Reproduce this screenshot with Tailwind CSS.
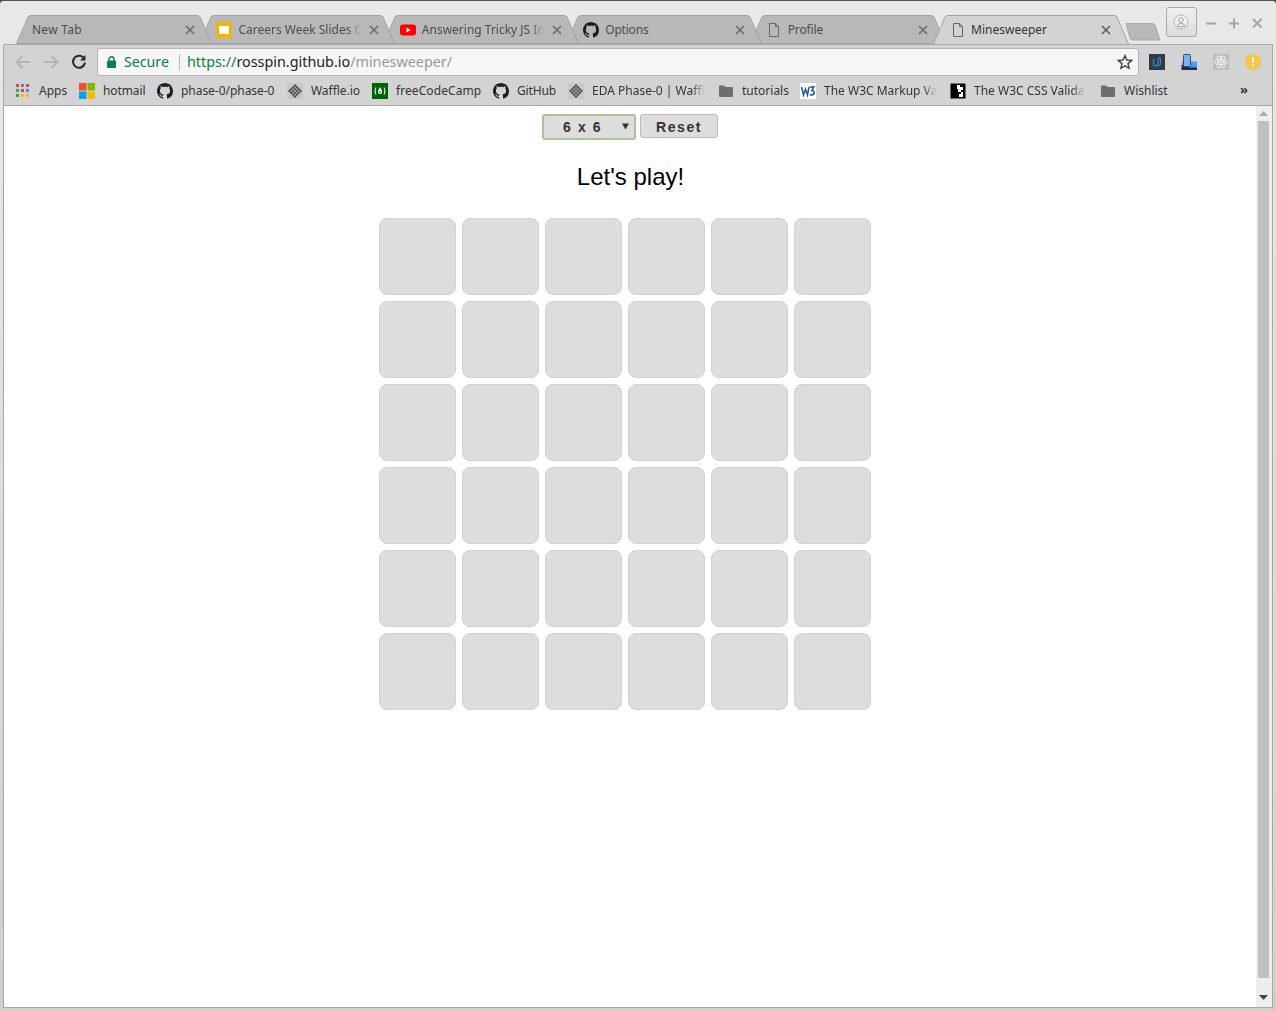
<!DOCTYPE html>
<html lang="en">
<head>
    <meta charset="UTF-8">
    <title>Minesweeper</title>
    <script src="https://cdn.jsdelivr.net/npm/@tailwindcss/browser@4"></script>
</head>
<body class="bg-[#4a4a4a] overflow-hidden">
<div class="w-[1276px] h-[1011px] flex flex-col rounded-t-[4px] border-t border-[#555] bg-gradient-to-b from-[#e9e9e9] to-[#cfcfcf] px-[3px] pb-[3px] font-['Noto_Sans',sans-serif] text-[12px] text-[#333]">

    <!-- tab strip -->
    <div class="h-[43px] shrink-0 flex items-end pl-[13px] relative">
        <div class="relative z-[6] w-[196px] h-[29px] shrink-0 flex items-center pl-[16px] pr-[16px]">
            <svg class="absolute inset-0" width="196" height="29"><path d="M0.5 28.5 L12 2 Q13 .5 15 .5 L181 .5 Q183 .5 184 2 L195.5 28.5 Z" fill="#b8b8b8" stroke="#a3a3a3"/></svg>
            <span class="relative flex-1 text-[#4c4c4c] tracking-[0.25px]">New Tab</span>
            <svg class="relative mr-[1px]" width="10" height="10" viewBox="0 0 10 10"><path d="M1 1 L9 9 M9 1 L1 9" stroke="#6b6b6b" stroke-width="1.6"/></svg>
        </div>
        <div class="relative z-[5] w-[196px] h-[29px] shrink-0 -ml-[12.6px] flex items-center pl-[17px] pr-[16px]">
            <svg class="absolute inset-0" width="196" height="29"><path d="M0.5 28.5 L12 2 Q13 .5 15 .5 L181 .5 Q183 .5 184 2 L195.5 28.5 Z" fill="#b8b8b8" stroke="#a3a3a3"/></svg>
            <svg class="relative shrink-0" width="16" height="16" viewBox="0 0 16 16"><rect width="16" height="16" rx="2" fill="#f4b400"/><rect x="3" y="4" width="10" height="8" fill="#fff"/></svg>
            <span class="relative ml-[6px] whitespace-nowrap text-[#4c4c4c] [mask-image:linear-gradient(to_right,#000_88%,transparent)]">Careers Week Slides C</span>
            <svg class="relative ml-auto" width="10" height="10" viewBox="0 0 10 10"><path d="M1 1 L9 9 M9 1 L1 9" stroke="#6b6b6b" stroke-width="1.6"/></svg>
        </div>
        <div class="relative z-[4] w-[196px] h-[29px] shrink-0 -ml-[12.6px] flex items-center pl-[17px] pr-[16px]">
            <svg class="absolute inset-0" width="196" height="29"><path d="M0.5 28.5 L12 2 Q13 .5 15 .5 L181 .5 Q183 .5 184 2 L195.5 28.5 Z" fill="#b8b8b8" stroke="#a3a3a3"/></svg>
            <svg class="relative shrink-0" width="16" height="16" viewBox="0 0 16 16"><rect y="2.5" width="16" height="11" rx="3" fill="#f00"/><path d="M6.5 5.5 L10.5 8 L6.5 10.5 Z" fill="#fff"/></svg>
            <span class="relative ml-[6px] whitespace-nowrap text-[#4c4c4c] [mask-image:linear-gradient(to_right,#000_88%,transparent)]">Answering Tricky JS In</span>
            <svg class="relative ml-auto mr-[1px]" width="10" height="10" viewBox="0 0 10 10"><path d="M1 1 L9 9 M9 1 L1 9" stroke="#6b6b6b" stroke-width="1.6"/></svg>
        </div>
        <div class="relative z-[3] w-[196px] h-[29px] shrink-0 -ml-[12.6px] flex items-center pl-[17px] pr-[16px]">
            <svg class="absolute inset-0" width="196" height="29"><path d="M0.5 28.5 L12 2 Q13 .5 15 .5 L181 .5 Q183 .5 184 2 L195.5 28.5 Z" fill="#b8b8b8" stroke="#a3a3a3"/></svg>
            <svg class="relative shrink-0" width="16" height="16" viewBox="0 0 16 16"><path fill="#1b1f23" d="M8 0C3.58 0 0 3.58 0 8c0 3.54 2.29 6.53 5.47 7.59.4.07.55-.17.55-.38 0-.19-.01-.82-.01-1.49-2.01.37-2.53-.49-2.69-.94-.09-.23-.48-.94-.82-1.13-.28-.15-.68-.52-.01-.53.63-.01 1.08.58 1.23.82.72 1.21 1.87.87 2.33.66.07-.52.28-.87.51-1.07-1.78-.2-3.64-.89-3.64-3.95 0-.87.31-1.59.82-2.15-.08-.2-.36-1.02.08-2.12 0 0 .67-.21 2.2.82.64-.18 1.32-.27 2-.27.68 0 1.36.09 2 .27 1.53-1.04 2.2-.82 2.2-.82.44 1.1.16 1.92.08 2.12.51.56.82 1.27.82 2.15 0 3.07-1.87 3.75-3.65 3.95.29.25.54.73.54 1.48 0 1.07-.01 1.93-.01 2.2 0 .21.15.46.55.38A8.013 8.013 0 0016 8c0-4.42-3.58-8-8-8z"/></svg>
            <span class="relative ml-[6px] text-[#4c4c4c] tracking-[-0.2px]">Options</span>
            <svg class="relative ml-auto mr-[1px]" width="10" height="10" viewBox="0 0 10 10"><path d="M1 1 L9 9 M9 1 L1 9" stroke="#6b6b6b" stroke-width="1.6"/></svg>
        </div>
        <div class="relative z-[2] w-[196px] h-[29px] shrink-0 -ml-[12.6px] flex items-center pl-[16px] pr-[16px]">
            <svg class="absolute inset-0" width="196" height="29"><path d="M0.5 28.5 L12 2 Q13 .5 15 .5 L181 .5 Q183 .5 184 2 L195.5 28.5 Z" fill="#b8b8b8" stroke="#a3a3a3"/></svg>
            <svg class="relative shrink-0" width="16" height="16" viewBox="0 0 16 16"><path d="M3.5 1.5 H9.5 L12.5 4.5 V14.5 H3.5 Z M9.5 1.5 V4.5 H12.5" fill="none" stroke="#666"/></svg>
            <span class="relative ml-[6px] text-[#4c4c4c] tracking-[-0.1px]">Profile</span>
            <svg class="relative ml-auto mr-[2px]" width="10" height="10" viewBox="0 0 10 10"><path d="M1 1 L9 9 M9 1 L1 9" stroke="#6b6b6b" stroke-width="1.6"/></svg>
        </div>
        <div class="relative z-[7] w-[196px] h-[30px] shrink-0 -ml-[12.6px] -mb-[1px] flex items-center pl-[17px] pr-[16px] pb-[1px]">
            <svg class="absolute inset-0" width="196" height="30"><path d="M0.5 29 L12 2 Q13 .5 15 .5 L181 .5 Q183 .5 184 2 L195.5 29" fill="#d3d3d3" stroke="#a3a3a3"/></svg>
            <svg class="relative shrink-0" width="16" height="16" viewBox="0 0 16 16"><path d="M3.5 1.5 H9.5 L12.5 4.5 V14.5 H3.5 Z M9.5 1.5 V4.5 H12.5" fill="none" stroke="#666"/></svg>
            <span class="relative ml-[5px] text-[#333]">Minesweeper</span>
            <svg class="relative ml-auto mr-[2px]" width="10" height="10" viewBox="0 0 10 10"><path d="M1 1 L9 9 M9 1 L1 9" stroke="#5c5c5c" stroke-width="1.6"/></svg>
        </div>
        <!-- new tab button -->
        <svg class="relative -ml-[4px] mb-[3px] shrink-0" width="36" height="18"><path d="M1 .5 H27 Q29 .5 30 2 L35 17 H7 Q6 17 5 15 Z" fill="#b8b8b8" stroke="#a8a8a8"/></svg>

        <!-- profile and window buttons sit over the strip -->
        <div class="absolute left-[1163px] top-[6px] w-[31px] h-[30px] pr-[1px] rounded-[3px] border border-[#a8a8a8] bg-gradient-to-b from-[#f0f0f0] to-[#dcdcdc] flex items-center justify-center">
            <svg width="16" height="16" viewBox="0 0 16 16"><circle cx="8" cy="8" r="7" fill="#f2f2f2" stroke="#b4b4b4"/><circle cx="8" cy="6" r="2.3" fill="none" stroke="#a0a0a0"/><path d="M4 12 Q4.5 9.5 8 9.5 Q11.5 9.5 12 12 Q8 13.5 4 12 Z" fill="none" stroke="#a0a0a0"/></svg>
        </div>
        <div class="absolute left-[1203px] top-[17px] flex items-center gap-[12px]">
            <svg width="11" height="11" viewBox="0 0 11 11"><path d="M0 5.5 H10" stroke="#a5a5a5" stroke-width="2"/></svg>
            <svg width="11" height="11" viewBox="0 0 11 11"><path d="M0 5.5 H10 M5 .5 V10.5" stroke="#a5a5a5" stroke-width="2"/></svg>
            <svg width="11" height="11" viewBox="0 0 11 11"><path d="M1 1 L9.5 9.5 M9.5 1 L1 9.5" stroke="#a5a5a5" stroke-width="2"/></svg>
        </div>
    </div>

    <!-- toolbar -->
    <div class="h-[35px] shrink-0 relative z-[1] flex items-center bg-[#d3d3d3] border-t border-l border-r border-[#a8a8a8] rounded-tl-[2px]">
        <svg class="ml-[10px]" width="18" height="16" viewBox="0 0 18 16"><path d="M16 8 H3 M8.5 2 L2.5 8 L8.5 14" fill="none" stroke="#b4b4b4" stroke-width="2"/></svg>
        <svg class="ml-[10px]" width="18" height="16" viewBox="0 0 18 16"><path d="M2 8 H15 M9.5 2 L15.5 8 L9.5 14" fill="none" stroke="#b4b4b4" stroke-width="2"/></svg>
        <svg class="ml-[11px]" width="16" height="16" viewBox="0 0 16 16"><path d="M13.4 5 A6 6 0 1 0 14 8.5" fill="none" stroke="#2a2a2a" stroke-width="2"/><path d="M14.5 1 V6.5 H9 Z" fill="#2a2a2a"/></svg>
        <div class="ml-[10px] w-[1042px] h-[28px] flex items-center rounded-[3px] border border-[#b4b4b4] bg-[#f6f6f6] relative">
            <svg class="ml-[9px]" width="9" height="12" viewBox="0 0 9 12"><rect y="4.5" width="9" height="7.5" rx="1" fill="#0b8043"/><path d="M2 5 V3.2 A2.5 2.5 0 0 1 7 3.2 V5" fill="none" stroke="#0b8043" stroke-width="1.4"/></svg>
            <span class="ml-[8px] text-[14.2px] text-[#0b8043]">Secure</span>
            <span class="ml-[10px] w-px h-[16px] bg-[#b8b8b8]"></span>
            <span class="ml-[7px] text-[14.35px] whitespace-nowrap text-[#999]"><span class="text-[#0b8043]">https://</span><span class="text-[#222]">rosspin.github.io</span>/minesweeper/</span>
            <svg class="ml-auto mr-[5px]" width="16" height="16" viewBox="0 0 16 16"><path d="M8 1.6 L9.9 6 L14.7 6.4 L11 9.6 L12.2 14.3 L8 11.8 L3.8 14.3 L5 9.6 L1.3 6.4 L6.1 6 Z" fill="none" stroke="#444" stroke-width="1.4"/></svg>
        </div>
        <div class="ml-[10px] flex items-center gap-[16px]">
            <svg width="16" height="16" viewBox="0 0 16 16"><rect width="16" height="16" fill="#2f3b4b"/><path d="M4.5 4.5 V9.5 Q4.5 12 6.8 12 Q9 12 9 9.5 V5 Q9 3.8 10 3.8 Q11.5 3.8 11.5 6 V9 Q11.5 11 10 12" fill="none" stroke="#3a86b4" stroke-width="1.3"/></svg>
            <svg width="16" height="16" viewBox="0 0 16 16"><rect x="1" y="7.5" width="15" height="8.5" rx="1" fill="#4a9cf0"/><path d="M0.5 11 H8 V13.5 H16 V16 H0.5 Z" fill="#1c2c44"/><rect x="2.5" y="0.5" width="7" height="12" rx="1" fill="#7ab4ee" stroke="#33506f"/></svg>
            <svg width="16" height="16" viewBox="0 0 16 16"><rect width="16" height="16" fill="#bdbdbd"/><g fill="none" stroke="#eee"><ellipse cx="8" cy="8" rx="6.5" ry="2.6"/><ellipse cx="8" cy="8" rx="6.5" ry="2.6" transform="rotate(60 8 8)"/><ellipse cx="8" cy="8" rx="6.5" ry="2.6" transform="rotate(120 8 8)"/></g><circle cx="8" cy="8" r="1.4" fill="#eee"/></svg>
            <svg width="16" height="16" viewBox="0 0 16 16"><circle cx="8" cy="8" r="8" fill="#f6c644"/><rect x="7" y="3.5" width="2" height="5.5" fill="#fff"/><rect x="7" y="10.5" width="2" height="2" fill="#fff"/></svg>
        </div>
    </div>

    <!-- bookmarks bar -->
    <div class="h-[27px] shrink-0 flex items-center gap-[12px] pl-[12px] pb-[2px] bg-[#d3d3d3] border-l border-r border-b border-[#a8a8a8] relative whitespace-nowrap">
        <div class="flex items-center gap-[7px] w-[51px]">
            <svg class="shrink-0" width="16" height="16" viewBox="1 0 16 16"><rect x="1" y="1" width="3" height="3" fill="#ea4335"/><rect x="6" y="1" width="3" height="3" fill="#4285f4"/><rect x="11" y="1" width="3" height="3" fill="#ea4335"/><rect x="1" y="6" width="3" height="3" fill="#34a853"/><rect x="6" y="6" width="3" height="3" fill="#ea4335"/><rect x="11" y="6" width="3" height="3" fill="#4285f4"/><rect x="1" y="11" width="3" height="3" fill="#34a853"/><rect x="6" y="11" width="3" height="3" fill="#fbbc05"/><rect x="11" y="11" width="3" height="3" fill="#fbbc05"/></svg>
            <span>Apps</span>
        </div>
        <div class="flex items-center gap-[8px] w-[66px]">
            <svg class="shrink-0" width="16" height="16" viewBox="0 0 16 16"><rect width="7.5" height="7.5" fill="#f25022"/><rect x="8.5" width="7.5" height="7.5" fill="#7fba00"/><rect y="8.5" width="7.5" height="7.5" fill="#00a4ef"/><rect x="8.5" y="8.5" width="7.5" height="7.5" fill="#ffb900"/></svg>
            <span class="tracking-[-0.1px]">hotmail</span>
        </div>
        <div class="flex items-center gap-[8px] w-[118px]">
            <svg class="shrink-0" width="16" height="16" viewBox="0 0 16 16"><path fill="#1b1f23" d="M8 0C3.58 0 0 3.58 0 8c0 3.54 2.29 6.53 5.47 7.59.4.07.55-.17.55-.38 0-.19-.01-.82-.01-1.49-2.01.37-2.53-.49-2.69-.94-.09-.23-.48-.94-.82-1.13-.28-.15-.68-.52-.01-.53.63-.01 1.08.58 1.23.82.72 1.21 1.87.87 2.33.66.07-.52.28-.87.51-1.07-1.78-.2-3.64-.89-3.64-3.95 0-.87.31-1.59.82-2.15-.08-.2-.36-1.02.08-2.12 0 0 .67-.21 2.2.82.64-.18 1.32-.27 2-.27.68 0 1.36.09 2 .27 1.53-1.04 2.2-.82 2.2-.82.44 1.1.16 1.92.08 2.12.51.56.82 1.27.82 2.15 0 3.07-1.87 3.75-3.65 3.95.29.25.54.73.54 1.48 0 1.07-.01 1.93-.01 2.2 0 .21.15.46.55.38A8.013 8.013 0 0016 8c0-4.42-3.58-8-8-8z"/></svg>
            <span class="tracking-[-0.04px]">phase-0/phase-0</span>
        </div>
        <div class="flex items-center gap-[8px] w-[73px]">
            <svg class="shrink-0" width="16" height="16" viewBox="0 0 16 16"><rect width="16" height="16" fill="#c8c8c8"/><path d="M8 1 L15 8 L8 15 L1 8 Z" fill="#4a4a4a"/><path d="M4.5 4.5 L11.5 11.5 M6.25 2.75 L13.25 9.75 M2.75 6.25 L9.75 13.25 M11.5 4.5 L4.5 11.5 M9.75 2.75 L2.75 9.75 M13.25 6.25 L6.25 13.25" stroke="#c8c8c8" stroke-width=".7"/></svg>
            <span class="tracking-[-0.05px]">Waffle.io</span>
        </div>
        <div class="flex items-center gap-[8px] w-[109px]">
            <svg class="shrink-0" width="16" height="16" viewBox="0 0 16 16"><rect width="16" height="16" fill="#006400"/><path d="M3.8 4.5 Q2.2 8 3.8 11.5 M12.2 4.5 Q13.8 8 12.2 11.5" fill="none" stroke="#fff"/><path d="M8 4 Q10.5 7.5 10 9.5 Q9.5 11 8 11 Q6.5 11 6 9.5 Q5.7 7.5 8 4 Z" fill="#fff"/><path d="M8 7.5 Q9 9 8.6 10 H7.4 Q7 9 8 7.5 Z" fill="#006400"/></svg>
            <span class="tracking-[0.08px]">freeCodeCamp</span>
        </div>
        <div class="flex items-center gap-[8px] w-[63px]">
            <svg class="shrink-0" width="16" height="16" viewBox="0 0 16 16"><path fill="#1b1f23" d="M8 0C3.58 0 0 3.58 0 8c0 3.54 2.29 6.53 5.47 7.59.4.07.55-.17.55-.38 0-.19-.01-.82-.01-1.49-2.01.37-2.53-.49-2.69-.94-.09-.23-.48-.94-.82-1.13-.28-.15-.68-.52-.01-.53.63-.01 1.08.58 1.23.82.72 1.21 1.87.87 2.33.66.07-.52.28-.87.51-1.07-1.78-.2-3.64-.89-3.64-3.95 0-.87.31-1.59.82-2.15-.08-.2-.36-1.02.08-2.12 0 0 .67-.21 2.2.82.64-.18 1.32-.27 2-.27.68 0 1.36.09 2 .27 1.53-1.04 2.2-.82 2.2-.82.44 1.1.16 1.92.08 2.12.51.56.82 1.27.82 2.15 0 3.07-1.87 3.75-3.65 3.95.29.25.54.73.54 1.48 0 1.07-.01 1.93-.01 2.2 0 .21.15.46.55.38A8.013 8.013 0 0016 8c0-4.42-3.58-8-8-8z"/></svg>
            <span class="tracking-[-0.15px]">GitHub</span>
        </div>
        <div class="flex items-center gap-[8px] w-[138px]">
            <svg class="shrink-0" width="16" height="16" viewBox="0 0 16 16"><rect width="16" height="16" fill="#c8c8c8"/><path d="M8 1 L15 8 L8 15 L1 8 Z" fill="#4a4a4a"/><path d="M4.5 4.5 L11.5 11.5 M6.25 2.75 L13.25 9.75 M2.75 6.25 L9.75 13.25 M11.5 4.5 L4.5 11.5 M9.75 2.75 L2.75 9.75 M13.25 6.25 L6.25 13.25" stroke="#c8c8c8" stroke-width=".7"/></svg>
            <span class="[mask-image:linear-gradient(to_right,#000_88%,transparent)]">EDA Phase-0 | Waffl</span>
        </div>
        <div class="flex items-center gap-[8px] w-[70px]">
            <svg class="shrink-0" width="16" height="16" viewBox="0 0 16 16"><path d="M1 3.5 Q1 2.5 2 2.5 H6 L7.5 4 H14 Q15 4 15 5 V13 Q15 14 14 14 H2 Q1 14 1 13 Z" fill="#6e6e6e"/></svg>
            <span>tutorials</span>
        </div>
        <div class="flex items-center gap-[8px] w-[138px]">
            <svg class="shrink-0" width="16" height="16" viewBox="0 0 16 16"><rect width="16" height="16" fill="#fff"/><path d="M1.5 4 L3.5 12 L5.5 6 L7.5 12 L9 4" fill="none" stroke="#1a5a9a" stroke-width="1.5"/><path d="M10 4 H14 L11.8 7.5 Q15 8 14 10.5 Q12.5 13 10 11.5" fill="none" stroke="#1a5a9a" stroke-width="1.5"/></svg>
            <span class="[mask-image:linear-gradient(to_right,#000_88%,transparent)]">The W3C Markup Va</span>
        </div>
        <div class="flex items-center gap-[8px] w-[138px]">
            <svg class="shrink-0" width="16" height="16" viewBox="0 0 16 16"><rect width="16" height="16" fill="#000" stroke="#ddd"/><path d="M7 2 H10 V4 H13 V7 H11 V9 H13 V14 H9 V11 H11 V9 H8 V6 H7 Z" fill="#fff"/></svg>
            <span class="[mask-image:linear-gradient(to_right,#000_88%,transparent)]">The W3C CSS Valida</span>
        </div>
        <div class="flex items-center gap-[8px]">
            <svg class="shrink-0" width="16" height="16" viewBox="0 0 16 16"><path d="M1 3.5 Q1 2.5 2 2.5 H6 L7.5 4 H14 Q15 4 15 5 V13 Q15 14 14 14 H2 Q1 14 1 13 Z" fill="#6e6e6e"/></svg>
            <span>Wishlist</span>
        </div>
        <span class="absolute left-[1236px] top-[1px] text-[13px] font-bold text-[#333]">»</span>
    </div>

    <!-- page -->
    <div class="flex-1 min-h-0 flex bg-white border-l border-r border-b border-[#a8a8a8] font-['Liberation_Sans',sans-serif]">
        <main class="flex-1 flex flex-col items-center pt-[8px]">
            <div class="flex items-start gap-[4px]">
                <div class="relative">
                    <select class="appearance-none block w-[94px] h-[26px] pl-[19px] rounded-[3px] border-2 border-[#a9c49a] bg-[#ddd] text-[14px] font-bold tracking-[1.6px] text-[#333]">
                        <option>6 x 6</option>
                    </select>
                    <svg class="absolute right-[7px] top-[9px]" width="7" height="7" viewBox="0 0 7 7"><path d="M0 .5 H7 L3.5 6.5 Z" fill="#333"/></svg>
                </div>
                <button class="w-[78px] h-[24px] pt-[2px] rounded-[3px] border border-[#bbb] bg-[#ddd] text-[14px] leading-[20px] font-bold tracking-[1.6px] text-[#333]">Reset</button>
            </div>
            <h1 class="mt-[23px] ml-[1px] text-[24px] leading-[28px] text-black">Let's play!</h1>
            <div class="mt-[27px] mr-[10px] grid grid-cols-[repeat(6,77px)] auto-rows-[77px] gap-[6px]">
                <div class="rounded-[8px] border border-[#d2d2d2] bg-[#ddd]"></div>
                <div class="rounded-[8px] border border-[#d2d2d2] bg-[#ddd]"></div>
                <div class="rounded-[8px] border border-[#d2d2d2] bg-[#ddd]"></div>
                <div class="rounded-[8px] border border-[#d2d2d2] bg-[#ddd]"></div>
                <div class="rounded-[8px] border border-[#d2d2d2] bg-[#ddd]"></div>
                <div class="rounded-[8px] border border-[#d2d2d2] bg-[#ddd]"></div>
                <div class="rounded-[8px] border border-[#d2d2d2] bg-[#ddd]"></div>
                <div class="rounded-[8px] border border-[#d2d2d2] bg-[#ddd]"></div>
                <div class="rounded-[8px] border border-[#d2d2d2] bg-[#ddd]"></div>
                <div class="rounded-[8px] border border-[#d2d2d2] bg-[#ddd]"></div>
                <div class="rounded-[8px] border border-[#d2d2d2] bg-[#ddd]"></div>
                <div class="rounded-[8px] border border-[#d2d2d2] bg-[#ddd]"></div>
                <div class="rounded-[8px] border border-[#d2d2d2] bg-[#ddd]"></div>
                <div class="rounded-[8px] border border-[#d2d2d2] bg-[#ddd]"></div>
                <div class="rounded-[8px] border border-[#d2d2d2] bg-[#ddd]"></div>
                <div class="rounded-[8px] border border-[#d2d2d2] bg-[#ddd]"></div>
                <div class="rounded-[8px] border border-[#d2d2d2] bg-[#ddd]"></div>
                <div class="rounded-[8px] border border-[#d2d2d2] bg-[#ddd]"></div>
                <div class="rounded-[8px] border border-[#d2d2d2] bg-[#ddd]"></div>
                <div class="rounded-[8px] border border-[#d2d2d2] bg-[#ddd]"></div>
                <div class="rounded-[8px] border border-[#d2d2d2] bg-[#ddd]"></div>
                <div class="rounded-[8px] border border-[#d2d2d2] bg-[#ddd]"></div>
                <div class="rounded-[8px] border border-[#d2d2d2] bg-[#ddd]"></div>
                <div class="rounded-[8px] border border-[#d2d2d2] bg-[#ddd]"></div>
                <div class="rounded-[8px] border border-[#d2d2d2] bg-[#ddd]"></div>
                <div class="rounded-[8px] border border-[#d2d2d2] bg-[#ddd]"></div>
                <div class="rounded-[8px] border border-[#d2d2d2] bg-[#ddd]"></div>
                <div class="rounded-[8px] border border-[#d2d2d2] bg-[#ddd]"></div>
                <div class="rounded-[8px] border border-[#d2d2d2] bg-[#ddd]"></div>
                <div class="rounded-[8px] border border-[#d2d2d2] bg-[#ddd]"></div>
                <div class="rounded-[8px] border border-[#d2d2d2] bg-[#ddd]"></div>
                <div class="rounded-[8px] border border-[#d2d2d2] bg-[#ddd]"></div>
                <div class="rounded-[8px] border border-[#d2d2d2] bg-[#ddd]"></div>
                <div class="rounded-[8px] border border-[#d2d2d2] bg-[#ddd]"></div>
                <div class="rounded-[8px] border border-[#d2d2d2] bg-[#ddd]"></div>
                <div class="rounded-[8px] border border-[#d2d2d2] bg-[#ddd]"></div>
            </div>
        </main>
        <!-- scrollbar -->
        <div class="w-[16px] shrink-0 flex flex-col items-start bg-[#eee]">
            <svg class="mt-[5px] ml-[3px]" width="9" height="6" viewBox="0 0 9 6"><path d="M4.5 0 L9 5 H0 Z" fill="#aaa"/></svg>
            <div class="mt-[4px] ml-[2px] w-[11px] flex-1 bg-[#c0c0c0]"></div>
            <svg class="mt-[17px] mb-[6px] ml-[3px]" width="9" height="6" viewBox="0 0 9 6"><path d="M0 0 H9 L4.5 5 Z" fill="#444"/></svg>
        </div>
    </div>
</div>
</body>
</html>
